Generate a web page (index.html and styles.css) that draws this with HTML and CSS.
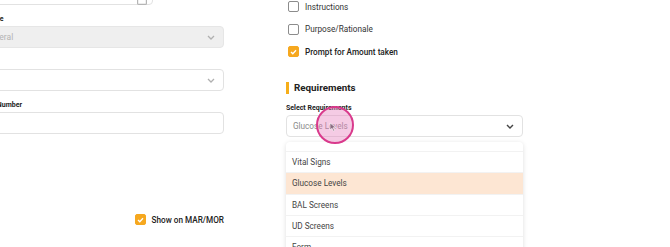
FILE: index.html
```html
<!DOCTYPE html>
<html>
<head>
  <title>Medication Form</title>
  <link rel="stylesheet" href="styles.css">
</head>
<body>
  <div class="page">
    <div class="col col-left">
      <div class="field">
        <div class="input input-short">
          <svg class="cal" width="10" height="11" viewBox="0 0 10 11"><rect x="0.6" y="1.6" width="8.8" height="8.8" rx="1" fill="none" stroke="#b5b5b5" stroke-width="1.2"/><line x1="0.6" y1="4.5" x2="9.4" y2="4.5" stroke="#b5b5b5" stroke-width="1.2"/></svg>
        </div>
      </div>
      <div class="field">
        <label class="label">State</label>
        <div class="input select disabled">
          <span class="placeholder">Peral</span>
          <svg class="chev" width="8" height="5" viewBox="0 0 8 5"><path d="M1 1l3 3 3-3" fill="none" stroke="#b0b0b0" stroke-width="1.3"/></svg>
        </div>
      </div>
      <div class="field">
        <label class="label"></label>
        <div class="input select">
          <span class="placeholder"></span>
          <svg class="chev" width="8" height="5" viewBox="0 0 8 5"><path d="M1 1l3 3 3-3" fill="none" stroke="#b0b0b0" stroke-width="1.3"/></svg>
        </div>
      </div>
      <div class="field">
        <label class="label">Rx Number</label>
        <div class="input"></div>
      </div>
      <div class="check-row check-right">
        <span class="box checked"><svg width="7" height="6" viewBox="0 0 7 6"><path d="M1 3l1.8 1.8L6 1.2" fill="none" stroke="#fff" stroke-width="1.3"/></svg></span>
        <span class="check-text">Show on MAR/MOR</span>
      </div>
    </div>

    <div class="col col-right">
      <div class="checks">
        <div class="check-row">
          <span class="box"></span>
          <span class="check-text normal">Instructions</span>
        </div>
        <div class="check-row">
          <span class="box"></span>
          <span class="check-text normal">Purpose/Rationale</span>
        </div>
        <div class="check-row">
          <span class="box checked"><svg width="7" height="6" viewBox="0 0 7 6"><path d="M1 3l1.8 1.8L6 1.2" fill="none" stroke="#fff" stroke-width="1.3"/></svg></span>
          <span class="check-text">Prompt for Amount taken</span>
        </div>
      </div>

      <h3 class="section-title">Requirements</h3>

      <label class="label">Select Requirements</label>
      <div class="input select">
        <span class="value">Glucose Levels</span>
        <svg class="chev" width="8" height="5" viewBox="0 0 8 5"><path d="M1 1l3 3 3-3" fill="none" stroke="#444" stroke-width="1.4"/></svg>
      </div>

      <div class="menu">
        <div class="menu-top"></div>
        <div class="menu-item">Vital Signs</div>
        <div class="menu-item active">Glucose Levels</div>
        <div class="menu-item">BAL Screens</div>
        <div class="menu-item">UD Screens</div>
        <div class="menu-item">Form</div>
      </div>

      <div class="tap">
        <svg width="8" height="10" viewBox="0 0 8 10"><path d="M1 1v7l2-1.8 1.4 3 1.2-.6-1.4-2.9H7z" fill="#8a6b80" stroke="#fff" stroke-width="0.6"/></svg>
      </div>
    </div>
  </div>
</body>
</html>
```

FILE: styles.css
```css
body {
  margin: 0;
  background: #fff;
  font-family: Roboto, 'Noto Sans', sans-serif;
  color: #333;
  overflow: hidden;
  height: 247px;
}
.page {
  display: grid;
  grid-template-columns: 237px 237px;
  column-gap: 62px;
  margin-left: -13px;
  margin-top: -17px;
}
.col { display: flex; flex-direction: column; }
.col-right { position: relative; padding-top: 18px; }

.field { margin-bottom: 10px; }
.label {
  display: block;
  font-size: 7px; font-weight: 700; line-height: 8px; height: 8px;
  color: #222; margin-bottom: 3px;
  white-space: nowrap;
}
.input {
  box-sizing: border-box;
  height: 22px;
  border: 1px solid #e2e2e2;
  border-radius: 4px;
  background: #fff;
  display: flex; align-items: center;
  padding: 0 6px;
}
.input-short { width: 166px; justify-content: flex-end; padding-right: 5px; }
.cal { margin-top: 10px; }
.select { justify-content: space-between; }
.disabled { background: #efefef; border-color: #e6e6e6; }
.placeholder { font-size: 8.5px; color: #b4b4b4; }
.value { font-size: 8.2px; color: #8a8a8a; }
.chev { margin-right: 2px; }

.check-row { display: flex; align-items: center; gap: 6px; height: 11px; }
.check-right { justify-content: flex-end; margin-top: 70px; }
.checks { display: flex; flex-direction: column; gap: 11.5px; padding-left: 2px; }
.box {
  box-sizing: border-box;
  width: 11px; height: 11px;
  border: 1.3px solid #8c8c8c; border-radius: 2px;
  display: flex; align-items: center; justify-content: center;
}
.box.checked { background: #f6a81f; border-color: #f6a81f; }
.check-text { font-size: 8.2px; font-weight: 500; color: #222; }
.check-text.normal { font-weight: 400; color: #333; }

.section-title {
  margin: 25px 0 10px;
  border-left: 3px solid #f6ae1a;
  padding-left: 5px;
  font-size: 9.8px; line-height: 12px; font-weight: 700; color: #222;
}

.menu {
  margin-top: 5px;
  border-radius: 4px;
  box-shadow: 0 1px 5px rgba(0,0,0,0.13);
  background: #fff;
}
.menu-top { height: 9px; border-bottom: 1px solid #f2f2f2; }
.menu-item {
  height: 21.3px; box-sizing: border-box;
  padding-left: 6px;
  display: flex; align-items: center;
  font-size: 8.2px; color: #444;
  border-bottom: 1px solid #f2f2f2;
}
.menu-item.active { background: #fde6d3; }

.tap {
  position: absolute;
  left: 30px; top: 123px;
  width: 38px; height: 38px; box-sizing: border-box;
  border: 2px solid #d93a8c; border-radius: 50%;
  background: rgba(232,130,190,0.42);
  display: flex; align-items: center; justify-content: center;
}
.tap svg { margin: 4px 5px 0 0; }
```
